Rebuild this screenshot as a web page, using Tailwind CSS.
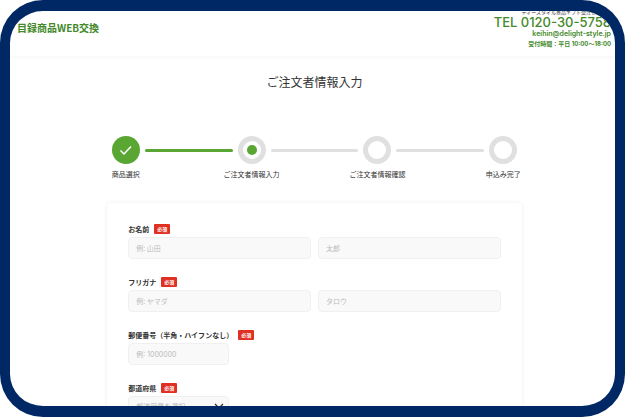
<!doctype html>
<html lang="ja">
  <head>
    <meta charset="UTF-8" />
    <meta name="viewport" content="width=device-width, initial-scale=1" />
    <title>ご注文者情報入力</title>
    <script src="https://cdn.jsdelivr.net/npm/@tailwindcss/browser@4"></script>
  </head>
  <body class="bg-white text-[#333] font-['Noto_Sans_CJK_JP',sans-serif]">
    <div class="h-screen overflow-hidden rounded-[43px] border-x-[10px] border-y-[11px] border-[#002864] bg-white">
      <header class="flex h-[46px] justify-between border-b border-[#f9f9f9] pr-1 pl-[7px] text-[#43892a] shadow-[0_1px_3px_rgba(0,0,0,0.03)]">
        <a href="#" class="mt-[9px] text-[10px] leading-4 font-bold">目録商品WEB交換</a>
        <div class="-mt-[4px] flex flex-col items-end font-['Inter','Noto_Sans_CJK_JP',sans-serif] whitespace-nowrap">
          <p class="text-[5px] leading-[10px] text-[#333]">ディースタイル景品ギフト受注センター</p>
          <a href="tel:0120305758" class="text-[13px] leading-[10px] font-medium">TEL 0120-30-5758</a>
          <a href="mailto:keihin@delight-style.jp" class="text-[7px] leading-[14px] font-semibold">keihin@delight-style.jp</a>
          <p class="text-[6px] leading-[6px] font-bold">受付時間：平日 10:00〜18:00</p>
        </div>
      </header>

      <main class="pl-1">
        <h1 class="mt-4 text-center text-[12px] leading-[18px]">ご注文者情報入力</h1>

        <!-- steps -->
        <ol class="mx-auto mt-[45px] flex w-[67.5%] max-w-3xl justify-between text-[7px]">
          <li class="flex w-7 flex-col items-center">
            <span class="flex size-7 items-center justify-center rounded-full bg-[#5aa632]">
              <svg class="size-4" viewBox="0 0 16 16" fill="none" stroke="white" stroke-width="1.5"><path d="M2.500 8.500l3.500 3.500L13 4.500" /></svg>
            </span>
            <span class="mt-[3px] leading-[14px] whitespace-nowrap">商品選択</span>
          </li>
          <li class="mx-[5px] mt-[13px] h-[3px] flex-1 rounded-full bg-[#5aa632]" aria-hidden="true"></li>
          <li class="flex w-7 flex-col items-center" aria-current="step">
            <span class="flex size-7 items-center justify-center rounded-full border-[5px] border-[#e0e0e0]">
              <span class="size-[10px] rounded-full bg-[#5aa632]"></span>
            </span>
            <span class="mt-[3px] leading-[14px] whitespace-nowrap">ご注文者情報入力</span>
          </li>
          <li class="mx-[5px] mt-[13px] h-[3px] flex-1 rounded-full bg-[#e0e0e0]" aria-hidden="true"></li>
          <li class="flex w-7 flex-col items-center">
            <span class="size-7 rounded-full border-[5px] border-[#e0e0e0]"></span>
            <span class="mt-[3px] leading-[14px] whitespace-nowrap">ご注文者情報確認</span>
          </li>
          <li class="mx-[5px] mt-[13px] h-[3px] flex-1 rounded-full bg-[#e0e0e0]" aria-hidden="true"></li>
          <li class="flex w-7 flex-col items-center">
            <span class="size-7 rounded-full border-[5px] border-[#e0e0e0]"></span>
            <span class="mt-[3px] leading-[14px] whitespace-nowrap">申込み完了</span>
          </li>
        </ol>

        <form class="mx-auto mt-[22px] flex w-[69%] max-w-3xl flex-col gap-[18px] rounded-[4px] p-[21px] text-[7px] shadow-[0_0_4px_rgba(0,0,0,0.07)]">
          <div>
            <div class="flex h-[10px] items-center gap-[5px]">
              <label for="sei" class="font-bold">お名前</label>
              <span class="h-[10px] w-4 rounded-[1px] bg-[#e03022] text-center text-[5px] leading-[10px] font-bold text-white">必須</span>
            </div>
            <div class="mt-[3px] grid grid-cols-2 gap-[7px]">
              <input id="sei" type="text" placeholder="例: 山田" class="h-[22px] min-w-0 rounded-[4px] border border-[#f0f0f0] bg-[#f9f9f9] px-[7px] placeholder:text-[#bbb]" />
              <input type="text" aria-label="お名前（名）" placeholder="太郎" class="h-[22px] min-w-0 rounded-[4px] border border-[#f0f0f0] bg-[#f9f9f9] px-[7px] placeholder:text-[#bbb]" />
            </div>
          </div>

          <div>
            <div class="flex h-[10px] items-center gap-[5px]">
              <label for="sei-kana" class="font-bold">フリガナ</label>
              <span class="h-[10px] w-4 rounded-[1px] bg-[#e03022] text-center text-[5px] leading-[10px] font-bold text-white">必須</span>
            </div>
            <div class="mt-[3px] grid grid-cols-2 gap-[7px]">
              <input id="sei-kana" type="text" placeholder="例: ヤマダ" class="h-[22px] min-w-0 rounded-[4px] border border-[#f0f0f0] bg-[#f9f9f9] px-[7px] placeholder:text-[#bbb]" />
              <input type="text" aria-label="フリガナ（メイ）" placeholder="タロウ" class="h-[22px] min-w-0 rounded-[4px] border border-[#f0f0f0] bg-[#f9f9f9] px-[7px] placeholder:text-[#bbb]" />
            </div>
          </div>

          <div>
            <div class="flex h-[10px] items-center gap-[5px]">
              <label for="zip" class="font-bold">郵便番号（半角・ハイフンなし）</label>
              <span class="h-[10px] w-4 rounded-[1px] bg-[#e03022] text-center text-[5px] leading-[10px] font-bold text-white">必須</span>
            </div>
            <input id="zip" type="text" placeholder="例: 1000000" class="mt-[3px] block h-[22px] w-[101px] rounded-[4px] border border-[#f0f0f0] bg-[#f9f9f9] px-[7px] font-['Inter','Noto_Sans_CJK_JP',sans-serif] placeholder:text-[#bbb]" />
          </div>

          <div>
            <div class="flex h-[10px] items-center gap-[5px]">
              <label for="pref" class="font-bold">都道府県</label>
              <span class="h-[10px] w-4 rounded-[1px] bg-[#e03022] text-center text-[5px] leading-[10px] font-bold text-white">必須</span>
            </div>
            <div class="relative mt-[3px] w-[101px]">
              <select id="pref" class="block h-[20px] w-full appearance-none rounded-[4px] border border-[#f0f0f0] bg-[#f9f9f9] px-[7px] text-[#bbb]">
                <option>都道府県を選択</option>
                <option>東京都</option>
                <option>大阪府</option>
              </select>
              <svg class="pointer-events-none absolute top-[5px] right-[5px] size-[10px]" viewBox="0 0 10 10" fill="none" stroke="#333" stroke-width="1.3"><path d="M1 3l4 4 4-4" /></svg>
            </div>
          </div>
        </form>
      </main>
    </div>
  </body>
</html>
